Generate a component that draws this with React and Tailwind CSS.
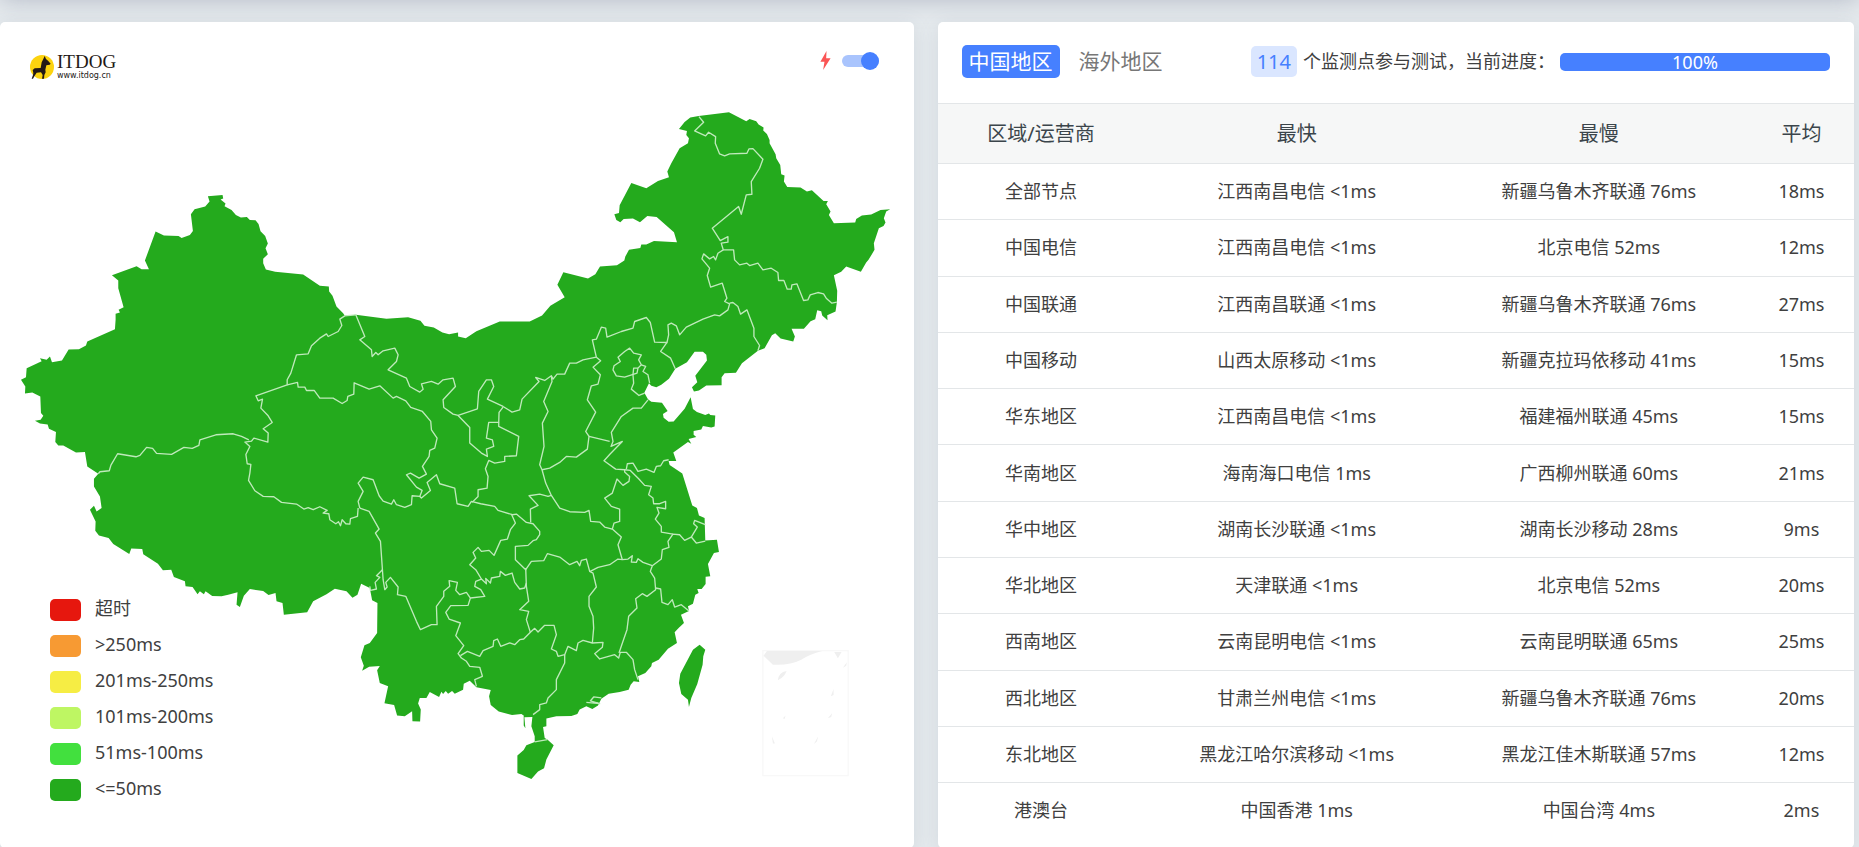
import React, { useState } from "react";

const legenda = [
  { label: "超时", cor: "bg-[#e6170e]" },
  { label: ">250ms", cor: "bg-[#f79a33]" },
  { label: "201ms-250ms", cor: "bg-[#f6ed44]" },
  { label: "101ms-200ms", cor: "bg-[#bef663]" },
  { label: "51ms-100ms", cor: "bg-[#42e03e]" },
  { label: "<=50ms", cor: "bg-[#24aa1d]" },
];

const rows = [
  ["全部节点", "江西南昌电信 <1ms", "新疆乌鲁木齐联通 76ms", "18ms"],
  ["中国电信", "江西南昌电信 <1ms", "北京电信 52ms", "12ms"],
  ["中国联通", "江西南昌联通 <1ms", "新疆乌鲁木齐联通 76ms", "27ms"],
  ["中国移动", "山西太原移动 <1ms", "新疆克拉玛依移动 41ms", "15ms"],
  ["华东地区", "江西南昌电信 <1ms", "福建福州联通 45ms", "15ms"],
  ["华南地区", "海南海口电信 1ms", "广西柳州联通 60ms", "21ms"],
  ["华中地区", "湖南长沙联通 <1ms", "湖南长沙移动 28ms", "9ms"],
  ["华北地区", "天津联通 <1ms", "北京电信 52ms", "20ms"],
  ["西南地区", "云南昆明电信 <1ms", "云南昆明联通 65ms", "25ms"],
  ["西北地区", "甘肃兰州电信 <1ms", "新疆乌鲁木齐联通 76ms", "20ms"],
  ["东北地区", "黑龙江哈尔滨移动 <1ms", "黑龙江佳木斯联通 57ms", "12ms"],
  ["港澳台", "中国香港 1ms", "中国台湾 4ms", "2ms"],
];

// mainland + Hainan
const outline =
  "M347 960 347 942 360 938 356 930 371 922 355 865 355 842 336 826 410 799 425 808 447 808 435 782 467 695 492 707 536 708 545 714 570 705 579 693 573 643 584 628 616 620 629 605 624 589 668 585 670 596 662 599 677 611 674 619 695 630 708 645 723 653 741 651 750 660 767 661 776 672 782 694 796 708 804 731 797 745 804 763 790 777 790 790 798 809 826 816 910 824 960 858 " +
  "987 860 988 875 998 888 1010 920 1030 940 1035 948 1068 945 1160 957 1225 952 1262 963 1274 978 1302 983 1328 998 1348 1003 1375 998 1375 1010 1398 1015 1430 994 1500 965 1590 965 1627 947 1652 918 1695 892 1673 855 1691 817 1765 836 1787 823 1801 800 1852 796 1874 782 1877 770 1888 750 1922 744 1925 734 1940 734 1963 723 2032 727 2023 697 1971 651 1943 648 1921 667 1900 656 1872 657 1862 667 1850 660 1844 643 1858 639 1860 616 1895 549 1940 565 1975 543 2008 532 " +
  "2003 515 2015 490 2040 445 2065 430 2068 415 2060 405 2062 393 2038 387 2055 366 2072 353 2097 348 2188 337 2240 364 2250 357 2270 364 2277 374 2292 383 2291 392 2302 402 2310 420 2310 430 2328 463 2330 475 2342 495 2345 523 2355 527 2353 545 2363 561 2403 563 2422 575 2437 571 2472 603 2485 603 2480 613 2493 635 2488 645 2503 670 2567 668 2570 657 2587 647 2615 644 2643 630 2672 628 2660 635 2653 655 2658 668 2652 678 2638 685 2623 730 2625 750 2607 780 2600 788 2584 816 2540 800 2525 816 2503 826 2513 873 2512 907 2508 935 2483 946 2484 961 2468 947 2465 934 2453 931 2447 958 2433 964 2413 987 2376 987 2386 1010 2381 1025 2343 1016 2327 1000 2317 1006 2295 1045 2275 1053 2227 1090 2209 1119 " +
  "2175 1120 2166 1132 2166 1156 2120 1157 2098 1172 2083 1175 2077 1162 2093 1147 2087 1128 2122 1082 2120 1065 2110 1056 2085 1056 2062 1087 2027 1107 2008 1137 1985 1155 1970 1162 1955 1158 1948 1150 1934 1179 1945 1198 1955 1206 1987 1209 2004 1234 1990 1243 1992 1254 2007 1266 2022 1265 2055 1227 2073 1192 2080 1228 2092 1237 2117 1246 2128 1241 2132 1246 2147 1247 2145 1280 2135 1283 2110 1279 2105 1289 2082 1294 2082 1305 2090 1312 2067 1318 2075 1332 2065 1327 2021 1358 2030 1384 2007 1384 2010 1396 2048 1421 2078 1517 2092 1525 2098 1547 2115 1555 2117 1622 2152 1620 2158 1657 2143 1660 " +
  "2125 1693 2132 1730 2118 1731 2118 1753 2106 1768 2093 1768 2097 1780 2087 1785 2080 1812 2065 1820 2068 1834 2044 1845 2053 1870 2037 1885 2025 1898 2032 1930 2005 1947 1977 1980 1957 1990 1955 2000 1937 2020 1915 2030 1919 2047 1902 2045 1893 2055 1887 2070 1860 2077 1827 2082 1805 2097 1795 2118 1778 2128 1760 2120 1740 2130 1733 2143 1715 2149 1670 2150 1640 2157 1640 2180 1630 2182 1635 2215 1643 2220 1662 2237 1640 2280 1633 2306 1615 2316 1595 2338 1553 2320 1553 2268 1572 2251 1580 2237 1605 2227 1605 2210 1595 2180 1598 2152 1574 2153 1577 2186 1572 2178 1572 2148 1565 2143 1537 2146 1497 2136 1473 2116 1468 2090 1473 2071 1430 2063 1410 2043 " +
  "1392 2052 1390 2070 1365 2082 1357 2074 1345 2082 1338 2074 1330 2083 1325 2076 1318 2092 1290 2077 1280 2095 1260 2095 1255 2112 1263 2130 1261 2166 1238 2165 1237 2135 1215 2150 1192 2148 1183 2116 1154 2111 1165 2060 1140 2050 1132 2012 1140 1999 1108 2001 1087 2013 1092 1998 1083 1973 1094 1937 1110 1930 1132 1900 1133 1810 1117 1802 1110 1765 1084 1752 1073 1785 1058 1794 1040 1775 1005 1767 980 1784 940 1805 922 1838 852 1845 848 1810 830 1805 827 1780 806 1786 790 1774 750 1768 732 1788 720 1822 710 1815 713 1778 685 1785 665 1790 637 1789 617 1775 612 1784 600 1775 593 1784 578 1762 557 1760 555 1745 522 1732 514 1710 489 1712 474 1692 430 1664 427 1648 394 1646 388 1663 340 1633 326 1615 297 1607 286 1593 287 1565 270 1530 282 1518 290 1535 305 1525 300 1490 282 1460 282 1437 295 1422 262 1400 255 1357 228 1358 190 1337 175 1337 166 1327 168 1297 147 1287 143 1274 120 1271 105 1263 122 1260 130 1248 123 1240 121 1190 97 1178 75 1181 76 1160 63 1140 78 1132 80 1105 125 1084 120 1075 140 1080 150 1070 156 1087 186 1082 206 1049 237 1048 258 1037 262 1025 345 988Z";

const taiwan =
  "M2100 1935 2117 1950 2111 1970 2109 1995 2093 2053 2075 2095 2068 2122 2065 2100 2045 2083 2038 2050 2042 2022 2080 1950Z";

// province borders
const borders = [
  "M1068 945 1035 948 1020 958 1026 977 1015 995 985 1010 980 1002 960 1015 935 1038 925 1062 890 1065 873 1120 862 1140 862 1155 768 1188 775 1203 788 1198 783 1225 805 1248 817 1268 790 1287 805 1300 804 1327 762 1315 755 1324 735 1327 750 1340 738 1364 742 1392 753 1394 750 1420 746 1442 765 1473 790 1490 822 1491 845 1508 890 1513 912 1528 925 1524 940 1530 960 1521 982 1532 970 1540 987 1542 990 1560 1008 1572 1016 1566 1022 1578 1027 1560 1038 1572 1050 1573 1052 1557 1073 1550 1075 1525",
  "M747 1320 725 1310 700 1302 648 1305 600 1320 597 1337 577 1346 552 1343 515 1364 470 1361 458 1346 440 1343 420 1367 408 1371 353 1362 333 1396 328 1413 300 1416 295 1422",
  "M1080 1525 1075 1505 1090 1475 1075 1450 1090 1432 1120 1440 1138 1488 1150 1504 1175 1513 1182 1500 1190 1515 1215 1523 1235 1515 1237 1488 1260 1490 1267 1472 1250 1462 1220 1425 1232 1420 1258 1435 1280 1423 1268 1400 1288 1370 1290 1352 1305 1345 1312 1315 1295 1290 1293 1265 1268 1235 1233 1223 1218 1203 1190 1190 1180 1195 1140 1158 1108 1168 1063 1149 1062 1183 1044 1190 1042 1202 1027 1211 1000 1195 960 1195 943 1172 920 1172 915 1162 895 1162 893 1148 862 1155",
  "M1080 1525 1108 1535 1138 1588 1127 1600 1142 1625 1150 1740 1155 1770 1162 1762 1158 1748 1172 1733 1195 1762 1193 1785 1218 1790 1250 1865 1262 1890 1295 1875 1312 1875 1310 1820 1332 1790 1332 1775 1350 1760 1348 1743 1373 1748 1368 1772 1380 1785 1400 1778 1412 1795 1405 1817 1353 1818 1338 1838 1348 1858 1382 1870 1368 1908 1392 1938 1375 1962 1385 1975 1400 1985 1410 2000 1440 2003 1448 2030 1425 2040 1430 2060",
  "M1148 1710 1130 1728 1140 1733 1126 1748 1130 1768 1112 1772 1110 1760",
  "M1382 1968 1403 1955 1440 1970 1450 1953 1480 1940 1482 1923 1493 1918 1503 1940 1530 1930 1545 1935 1560 1920 1572 1918 1592 1898 1605 1886 1615 1897 1635 1877 1663 1877 1670 1905 1655 1948 1670 1955 1675 1970 1695 1965 1705 1940 1730 1953 1735 1930 1750 1922 1778 1930 1810 1928 1808 1943 1785 1962 1800 1978 1845 1965 1857 1975 1862 1958 1880 1958 1900 1980 1905 2010 1915 2040",
  "M1412 1795 1455 1790 1443 1770 1425 1760 1428 1745 1445 1738 1460 1752 1458 1736 1472 1750 1475 1735 1500 1730 1502 1715 1517 1727 1537 1720 1545 1748 1560 1768 1575 1765 1580 1750",
  "M1578 1705 1580 1760 1587 1805 1560 1830 1587 1835 1580 1860 1592 1898",
  "M1445 1738 1428 1710 1410 1695 1428 1675 1420 1658 1435 1643 1445 1655 1468 1652 1483 1667 1503 1622 1523 1618 1532 1590 1547 1570 1535 1543",
  "M1260 1490 1265 1495 1292 1472 1282 1448 1310 1425 1320 1452 1365 1465 1372 1512 1405 1520 1415 1505 1443 1512 1485 1520 1495 1532 1538 1545 1550 1543 1580 1568 1600 1572 1620 1595 1620 1605 1610 1620 1600 1623 1585 1637 1547 1640 1547 1680 1578 1710 1595 1685 1632 1683 1643 1662 1680 1672 1710 1695 1732 1685 1740 1698 1745 1682 1760 1678 1770 1715 1780 1720 1790 1762 1768 1790 1768 1820 1780 1850 1782 1885 1778 1930",
  "M1770 1716 1795 1703 1830 1695 1855 1678 1868 1680 1885 1678 1898 1668 1895 1687 1910 1688 1915 1677 1930 1688 1958 1698 1952 1715 1965 1735 1968 1770 1942 1790 1928 1782 1908 1797 1912 1825 1887 1850 1882 1890 1870 1925 1858 1960",
  "M1695 1965 1695 1990 1670 2040 1670 2070 1645 2095 1640 2110 1620 2115 1620 2130 1600 2145",
  "M1605 2227 1643 2220",
  "M1760 2108 1800 2112 1772 2104 1782 2092 1805 2095",
  "M1968 1765 1983 1768 1987 1808 2005 1815 2018 1800 2025 1822 2045 1815 2068 1834",
  "M1958 1698 1985 1678 1988 1650 2008 1643 2005 1625 2020 1603 2040 1605 2055 1622 2075 1612 2090 1630 2117 1624",
  "M2075 1612 2093 1582 2082 1572 2085 1562 2117 1575",
  "M2020 1603 1985 1597 1985 1580 1967 1558 1978 1540 1972 1523 1998 1527 1998 1505 1980 1512 1962 1512 1960 1495 1947 1485 1955 1460 1935 1457 1917 1437 1892 1412 1875 1410",
  "M1880 1408 1883 1392 1900 1390 1915 1415 1940 1408 1963 1418 1970 1400 1983 1398 1992 1383 2007 1380",
  "M1945 1200 1925 1225 1900 1225 1865 1250 1835 1298 1840 1325 1834 1340 1868 1325 1832 1362 1813 1383 1848 1408 1875 1410 1875 1417 1890 1430 1888 1445 1870 1457 1852 1438 1838 1480 1815 1495 1835 1520 1860 1528 1860 1565 1843 1570 1838 1588 1865 1612 1855 1635 1868 1680",
  "M1838 1588 1815 1582 1800 1567 1773 1565 1768 1532 1755 1538 1710 1536 1680 1525 1655 1487 1638 1450 1627 1410 1620 1395 1633 1340 1628 1270 1645 1235 1632 1205 1657 1145 1655 1128",
  "M1655 1487 1645 1490 1620 1483 1588 1488 1615 1517 1592 1528 1593 1568",
  "M1627 1410 1650 1405 1680 1388 1700 1370 1730 1372 1763 1348 1768 1310 1830 1325",
  "M1768 1310 1758 1295 1788 1237 1763 1200 1775 1158 1795 1153 1802 1125 1780 1102 1803 1083 1790 1072",
  "M1068 945 1095 1010 1080 1020 1115 1050 1117 1070 1128 1058 1135 1065 1150 1053 1185 1045 1195 1065 1190 1085 1165 1110 1220 1135 1230 1160 1260 1177 1270 1168 1265 1152 1295 1145 1315 1153 1330 1140 1360 1135 1367 1160 1330 1200 1332 1223 1360 1243 1375 1247 1433 1227 1437 1175 1460 1140 1475 1140 1482 1160 1463 1198 1510 1220 1537 1237 1560 1230 1567 1198 1618 1145 1608 1133 1635 1142 1655 1128 1660 1138 1672 1123 1695 1123 1710 1090 1730 1090 1750 1080 1790 1072 1778 1020 1790 1018 1805 982 1818 985 1822 1012 1865 995 1900 985 1905 965 1940 953 1952 968 1955 982 1965 1027 2002 1028 2007 1005 2005 975 2015 970 2030 978 2040 1005 2060 982 2110 958 2145 945 2160 948 2185 930 2190 912 2175 905 2182 895 2168 850 2133 862 2123 827 2130 805 2107 777 2112 762 2130 777 2142 770 2148 780 2155 760 2171 750 2165 730 2185 727 2185 710 2162 722 2138 685 2217 620 2225 643 2240 585 2257 583 2255 545 2280 505 2290 478 2260 446 2248 447 2242 460 2190 462 2175 468 2160 462 2147 430 2148 410 2127 397 2118 408 2085 393 2112 367 2098 350",
  "M2171 750 2202 750 2205 780 2220 795 2242 790 2250 797 2275 790 2290 810 2315 805 2335 818 2337 842 2353 842 2363 868 2375 868 2377 855 2392 852 2412 902 2425 900 2432 885 2455 878 2472 882 2480 895 2497 910 2512 907",
  "M2190 910 2200 908 2215 920 2223 943 2242 930 2263 985 2263 1010 2280 1037 2275 1053",
  "M2002 1028 1983 1055 2013 1075 2027 1107",
  "M1890 1045 1902 1060 1925 1065 1917 1080 1925 1095 1915 1105 1912 1120 1875 1132 1850 1128 1840 1110 1843 1098 1862 1085 1855 1072 1875 1055Z",
  "M1925 1095 1938 1100 1930 1115 1945 1125 1950 1150M1915 1105 1902 1105 1900 1125 1902 1150 1895 1168 1918 1187 1935 1180",
  "M1375 1247 1410 1283 1410 1330 1445 1360 1463 1370 1460 1348 1482 1340 1478 1320 1460 1315 1467 1268 1497 1268 1498 1238 1510 1222",
  "M1497 1268 1497 1280 1557 1310 1550 1368 1515 1370 1515 1385 1485 1390 1467 1382 1457 1407 1465 1430 1462 1465 1435 1470 1435 1490 1417 1508",
];

function ChinaMap() {
  return (
    <svg viewBox="0 66 2742 2472" className="block w-full" role="img" aria-label="中国地图">
      <path d={outline} fill="#24aa1d" />
      <path d={taiwan} fill="#24aa1d" />
      <g fill="none" stroke="#bfeabb" strokeWidth="4" strokeLinejoin="round">
        {borders.map((d) => (
          <path key={d} d={d} />
        ))}
      </g>

      {/* South China Sea inset */}
      <rect x="2290" y="1953" width="256" height="375" fill="none" stroke="#f8f8f8" strokeWidth="4" />
      <g fill="#efefef">
        <path d="M2292 1968 2302 1954H2468Q2430 1964 2405 1980 2370 1998 2320 1995Z" />
        <path d="M2504 1957H2526L2515 1976Z" />
        <path d="M2335 2042Q2337 2018 2361 2014 2355 2032 2335 2042Z" />
        <path d="M2494 2090 2502 2068V2086ZM2485 2156 2498 2140 2495 2152ZM2317 2210 2326 2232H2320ZM2443 2233 2456 2210 2452 2226ZM2350 2156 2358 2148 2355 2158ZM2530 2004 2542 1988 2540 1998Z" />
      </g>
    </svg>
  );
}

function Logo() {
  return (
    <a href="#" className="flex items-center gap-[3px] text-[#231815]">
      <svg viewBox="0 0 72 72" className="size-6">
        <circle cx="36" cy="36" r="36" fill="#fcd30f" />
        <path
          d="M44 3 48 12 54 17 62 26 59 29 49 31 46 44 47 52 43 60 42 71 36 71 38 60 33 52 20 53 14 62 9 71 5 71 9 60 10 54 8 45 14 40 32 39 35 22 40 12Z"
          fill="#231815"
        />
      </svg>
      <span className="flex flex-col">
        <span className="font-['Liberation_Serif',serif] text-[19px] leading-[18px]">ITDOG</span>
        <span className="font-['DejaVu_Sans',sans-serif] text-[8px] leading-[10px]">www.itdog.cn</span>
      </span>
    </a>
  );
}

export default function App() {
  const [fast, setFast] = useState(true);
  const [aba, setAba] = useState("cn");

  const abaAtiva = "rounded-[5px] bg-[#4680ff] px-[7px] text-[21px] leading-[33px] text-white";
  const abaInativa = "rounded-[5px] px-[7px] text-[21px] leading-[33px] text-[#777]";

  return (
    <div className="min-h-screen overflow-hidden bg-[#e6ebee] font-['Noto_Sans','Noto_Sans_CJK_SC',sans-serif] text-[18px] text-[#404040]">
      <div className="mx-5 h-0 shadow-[0_-20px_24px_20px_rgba(130,135,160,0.5)]"></div>

      <main className="mt-[22px] grid grid-cols-[914fr_917fr] gap-6 pr-[5px]">
        <section className="relative rounded-[5px] bg-white pb-[2px] shadow-[0_4px_20px_rgba(90,100,130,0.15)]">
          <ChinaMap />

          <div className="absolute left-[30px] top-[31px]">
            <Logo />
          </div>

          <div className="absolute right-[35px] top-[29px] flex items-center gap-[11px]">
            <svg viewBox="0 0 30 56" className="h-[19px] w-[11px]" fill="#fa5555">
              <path d="M18 0 0 32H12L8 56 30 21H17Z" />
            </svg>
            <input
              type="checkbox"
              aria-label="快速模式"
              checked={fast}
              onChange={(e) => setFast(e.target.checked)}
              className="relative h-3 w-[37px] appearance-none rounded-full bg-[#a9c4fd] before:absolute before:-top-[3px] before:left-0 before:size-[18px] before:rounded-full before:bg-[#4680ff] checked:before:left-[19px]"
            />
          </div>

          <ul className="absolute bottom-10 left-[50px]">
            {legenda.map((item) => (
              <li key={item.label} className="flex h-9 items-center gap-[14px]">
                <span className={`h-[22px] w-[31px] rounded-[5px] ${item.cor}`}></span>
                <span className="pb-1 leading-6">{item.label}</span>
              </li>
            ))}
          </ul>
        </section>

        <section className="rounded-[5px] bg-white shadow-[0_4px_20px_rgba(90,100,130,0.15)]">
          <header className="flex h-[81px] items-center gap-3 whitespace-nowrap px-6 pb-[2px]">
            <button onClick={() => setAba("cn")} className={aba === "cn" ? abaAtiva : abaInativa}>
              中国地区
            </button>
            <button onClick={() => setAba("intl")} className={aba === "intl" ? abaAtiva : abaInativa}>
              海外地区
            </button>

            <div className="ml-auto flex items-center">
              <span className="mr-[6px] rounded-[5px] bg-[#dae6ff] px-[6px] text-[20px] leading-[31px] text-[#4680ff]">
                114
              </span>
              <span>个监测点参与测试，当前进度：</span>
              <div
                role="progressbar"
                aria-valuenow={100}
                className="ml-[5px] w-[270px] rounded-[5px] bg-[#4680ff] text-center leading-[18px] text-white"
              >
                100%
              </div>
            </div>
          </header>

          <table className="h-[735px] w-full table-fixed border-collapse text-center">
            <thead>
              <tr className="h-[60px] border-y border-[#e3e6e8] bg-[#f6f7f7] text-[20px] text-[#3b454b]">
                <th className="w-[207px] font-normal">区域/运营商</th>
                <th className="w-[304px] font-normal">最快</th>
                <th className="w-[300px] font-normal">最慢</th>
                <th className="w-[105px] font-normal">平均</th>
              </tr>
            </thead>
            <tbody>
              {rows.map((r) => (
                <tr key={r[0]} className="border-b border-[#e3e6e8] last:border-b-0">
                  {r.map((valor, i) => (
                    <td key={i}>{valor}</td>
                  ))}
                </tr>
              ))}
            </tbody>
          </table>
        </section>
      </main>
    </div>
  );
}
